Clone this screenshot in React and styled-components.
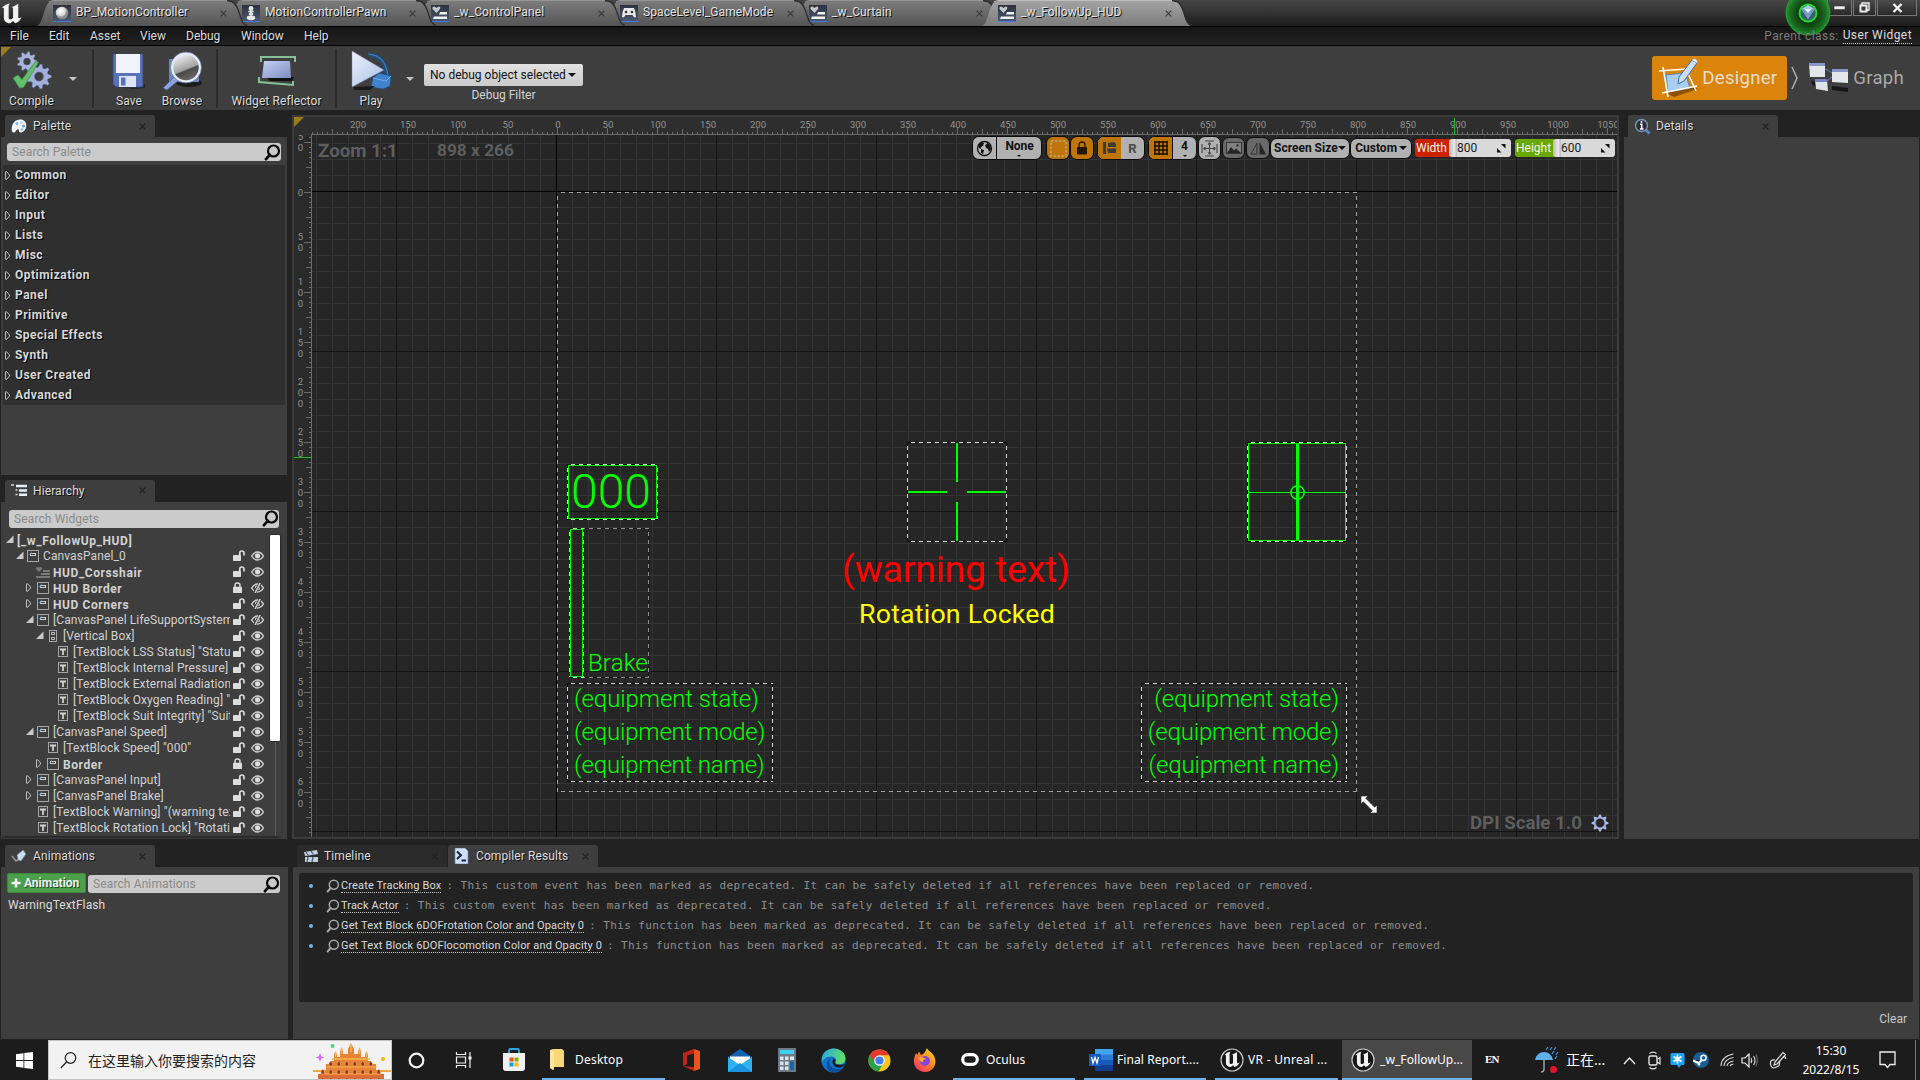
import React from "react";
import styled, { createGlobalStyle, css } from "styled-components";

const Global = createGlobalStyle`
  * { box-sizing: border-box; }
  html, body { margin: 0; padding: 0; background: #222; overflow: hidden; }
  svg { display: block; flex: none; }
`;

const Screen = styled.div`
  width: 1920px;
  height: 1080px;
  display: flex;
  flex-direction: column;
  background: #222;
  color: #dcdcdc;
  font: 12px/16px Roboto, "Noto Sans CJK SC", sans-serif;
  white-space: nowrap;
  overflow: hidden;
`;

/* ---------- title bar ---------- */
const TitleBar = styled.header`
  height: 27px;
  flex: none;
  display: flex;
  border-bottom: 1px solid #000;
  background: linear-gradient(#454545, #393939 35%, #1c1c1c);
  position: relative;
`;
const LogoBox = styled.div`
  width: 37px;
  padding: 3px 0 0 1px;
`;
const TabStrip = styled.nav`
  display: flex;
  flex: 1;
`;
const MajorTab = styled.div`
  width: 211px;
  height: 26px;
  margin-right: -22px;
  position: relative;
  z-index: ${(p) => p.$z};
  display: flex;
  align-items: flex-start;
  padding: 5px 0 0 16px;
  > svg:first-child { position: absolute; left: 0; top: 0; }
`;
const MajorLabel = styled.span`
  position: relative;
  margin-left: 5px;
  width: 144px;
  line-height: 15px;
  color: #e3e3e3;
  text-shadow: 1px 1px 0 #111;
  letter-spacing: 0.1px;
`;
const IconTile = styled.div`
  width: 18px;
  height: 17px;
  position: relative;
  background: linear-gradient(#2b3240, #4c586c);
  border-bottom: 1px solid #3f7bf0;
  > svg { position: absolute; left: 0; top: 0; }
`;
const WindowButtons = styled.div`
  display: flex;
  gap: 1px;
  height: 16px;
  margin-right: 3px;
`;
const WinButton = styled.div`
  width: ${(p) => p.$w}px;
  height: 16px;
  border: 1px solid #777;
  border-top: 0;
  background: linear-gradient(#4a4a4a, #2a2a2a);
  display: flex;
  justify-content: center;
  align-items: center;
`;
const SourceOrb = styled.div`
  position: absolute;
  left: 1785px;
  top: -10px;
  z-index: 20;
`;

/* ---------- menu ---------- */
const MenuBar = styled.div`
  height: 19px;
  flex: none;
  display: flex;
  align-items: center;
  padding: 0 8px 1px 10px;
  background: linear-gradient(#151515, #222);
  border-bottom: 1px solid #000;
`;
const MenuItem = styled.span`
  width: ${(p) => p.$w}px;
  color: #dedede;
  text-shadow: 1px 1px 0 #000;
`;
const ParentClass = styled.div`
  margin-left: auto;
  display: flex;
  gap: 5px;
  color: #7b7b7b;
  letter-spacing: 0.42px;
  position: relative;
  z-index: 30;
  > span:first-child { margin-right: -1px; }
`;
const DottedLink = styled.span`
  color: #dcdcdc;
  line-height: ${(p) => p.$lh || 15}px;
  height: ${(p) => (p.$lh || 15) + 1}px;
  border-bottom: 1px dotted #c8c8c8;
`;

/* ---------- toolbar ---------- */
const Toolbar = styled.div`
  height: 64px;
  flex: none;
  margin-left: 1px;
  background: #3e3e3e;
  display: flex;
  align-items: flex-start;
  position: relative;
`;
const Corner = styled.i`
  position: absolute;
  left: 0;
  top: ${(p) => p.$top || 0}px;
  border-top: 10px solid #9c7d1e;
  border-right: 10px solid transparent;
`;
const Tool = styled.div`
  width: ${(p) => p.$w}px;
  height: 64px;
  flex: none;
  display: flex;
  flex-direction: column;
  align-items: center;
  padding-top: 4px;
  color: #dcdcdc;
  text-shadow: 1px 1px 0 #111;
  > span { margin-top: 1px; line-height: 16px; letter-spacing: 0.1px; }
`;
const ToolSep = styled.i`
  width: 2px;
  height: 59px;
  margin-top: 3px;
  margin-left: ${(p) => p.$ml || 0}px;
  background: #2c2c2c;
`;
const Caret = styled.i`
  width: 0;
  border: ${(p) => p.$s || 4}px solid transparent;
  border-top-color: ${(p) => p.$c || "#c6c6c6"};
  border-bottom: 0;
  margin: ${(p) => p.$m || "0"};
  flex: none;
`;
const DebugBox = styled.div`
  display: flex;
  flex-direction: column;
  align-items: center;
  padding-top: 18px;
  margin-left: 10px;
  > span { margin-top: 1px; color: #d4d4d4; }
`;
const Combo = styled.div`
  width: 159px;
  height: 22px;
  border-radius: 2px;
  background: linear-gradient(#e2e2e2, #cbcbcb);
  color: #111;
  display: flex;
  align-items: center;
  padding-left: 6px;
`;
const ModeBar = styled.div`
  margin: 10px 0 0 auto;
  display: flex;
  align-items: center;
  height: 44px;
  font-size: 18.67px;
  letter-spacing: 0.22px;
  color: #a9a9a9;
  padding-right: 16px;
  > span { margin-left: 4px; }
`;
const ModeActive = styled.div`
  width: 135px;
  height: 44px;
  border-radius: 3px;
  background: #db840c;
  color: #e8dccb;
  display: flex;
  align-items: center;
  padding-left: 6px;
  gap: 2px;
`;

/* ---------- docking ---------- */
const Main = styled.div`
  display: flex;
  flex: none;
  margin-top: 5px;
  height: 724px;
  padding-left: 1px;
  gap: 5px;
`;
const LeftColumn = styled.div`
  width: 286px;
  display: flex;
  flex-direction: column;
  gap: 5px;
`;
const Dock = styled.section`
  width: ${(p) => p.$w}px;
  flex: ${(p) => (p.$grow ? 1 : "none")};
  min-height: 0;
  display: flex;
  flex-direction: column;
`;
const TabRow = styled.div`
  display: flex;
  gap: 1px;
  height: 22px;
  flex: none;
  padding-left: 4px;
`;
const DockTab = styled.div`
  width: 150px;
  height: 22px;
  border-radius: 3px 3px 0 0;
  background: ${(p) => (p.$dim ? "#2b2b2b" : "#3e3e3e")};
  display: flex;
  align-items: center;
  padding-left: 6px;
  color: #dcdcdc;
  text-shadow: 1px 1px 0 #111;
  > span { margin-left: ${(p) => p.$gap || 6}px; flex: 1; letter-spacing: 0.1px; }
  > svg:last-child { margin-right: 9px; }
`;
const DockBody = styled.div`
  flex: 1;
  min-height: 0;
  background: #3e3e3e;
  padding: ${(p) => p.$pad || "0"};
  display: flex;
  flex-direction: column;
  overflow: hidden;
`;
const Search = styled.div`
  height: 18px;
  flex: none;
  width: ${(p) => p.$w}px;
  border-radius: 3px;
  background: #cbcbcb;
  color: #8a8a8a;
  display: flex;
  align-items: center;
  justify-content: space-between;
  padding: 0 0 0 5px;
  letter-spacing: 0.12px;
`;
const CategoryList = styled.div`
  margin: 4px -4px 0;
  background: #2f2f2f;
  width: 282px;
`;
const Category = styled.div`
  height: 20px;
  display: flex;
  align-items: center;
  padding-left: 2px;
  gap: 3px;
  font-weight: 700;
  color: #d8d8d8;
  text-shadow: 1px 1px 0 #000;
  letter-spacing: 0.48px;
`;

/* ---------- hierarchy ---------- */
const TreeArea = styled.div`
  display: flex;
  margin-top: 4px;
  height: 304px;
  overflow: hidden;
  width: 280px;
  margin-left: -8px;
  box-shadow: 0 2px 3px -1px #1c1c1c;
`;
const Tree = styled.div`width: 267px; flex: none; margin-right: 1px;`;
const TreeRow = styled.div`
  height: 16px;
  display: flex;
  align-items: center;
  padding-left: ${(p) => 5 + 10 * p.$d}px;
  font-weight: ${(p) => (p.$b ? 700 : 400)};
  color: #d2d2d2;
`;
const TreeArrow = styled.div`width: 10px; flex: none; display: flex;`;
const TreeIcon = styled.div`
  width: 16px;
  flex: none;
  display: flex;
  justify-content: center;
  padding-right: 3px;
  padding-left: 1px;
`;
const TreeName = styled.span`
  flex: 1;
  overflow: hidden;
  letter-spacing: ${(p) => (p.$b ? 0.58 : 0.1)}px;
  padding-top: ${(p) => (p.$b ? 2 : 0)}px;
  padding-left: 1px;
`;
const TreeFlags = styled.div`width: 38px; flex: none; display: flex; align-items: center; gap: 6px; padding-left: 3px;`;
const ScrollTrack = styled.div`
  width: 12px;
  display: flex;
  flex-direction: column;
  align-items: center;
  > b { width: 12px; height: 208px; margin-top: 2px; border-radius: 2px; background: #fff; border: 1px solid #2b2b2b; flex: none; }
  > i { width: 1px; flex: 1; background: #5a5a5a; }
`;

/* ---------- designer viewport ---------- */
const Viewport = styled.div`
  width: 1327px;
  flex: none;
  height: 724px;
  position: relative;
  display: grid;
  grid-template: 18px 702px / 18px 1305px;
  border: 2px solid #3b3b3b;
  background: #242424;
  overflow: hidden;
`;
const HRuler = styled.div`
  grid-column: 2;
  display: flex;
  margin-left: -1px;
  padding-left: 22px;
  height: 18px;
  overflow: hidden;
  border-bottom: 1px solid #6b6b6b;
  color: #929292;
  font-size: 9.6px;
  line-height: 16px;
  background:
    repeating-linear-gradient(90deg, #6b6b6b 0 1px, transparent 1px 50px) 46px 100% / 100% 6px no-repeat,
    repeating-linear-gradient(90deg, #6b6b6b 0 1px, transparent 1px 25px) 21px 100% / 100% 5px no-repeat,
    repeating-linear-gradient(90deg, #6b6b6b 0 1px, transparent 1px 5px) 1px 100% / 100% 2px no-repeat,
    #2e2e2e;
`;
const HMark = styled.span`width: 50px; flex: none; text-align: center;`;
const RulerCorner = styled.div`background: #2e2e2e;`;
const VRuler = styled.div`
  grid-column: 1;
  grid-row: 2;
  width: 18px;
  overflow: hidden;
  border-right: 1px solid #6b6b6b;
  color: #929292;
  font-size: 9.6px;
  line-height: 11px;
  background:
    repeating-linear-gradient(#6b6b6b 0 1px, transparent 1px 50px) 100% 7px / 7px 100% no-repeat,
    repeating-linear-gradient(#6b6b6b 0 1px, transparent 1px 25px) 100% 7px / 5px 100% no-repeat,
    repeating-linear-gradient(#6b6b6b 0 1px, transparent 1px 5px) 100% 2px / 2px 100% no-repeat,
    #2a2a2a;
`;
const VMarks = styled.div`margin-top: -18px;`;
const VMark = styled.div`
  height: 50px;
  width: 13px;
  display: flex;
  flex-direction: column;
  align-items: center;
  justify-content: center;
`;
const Grid = styled.div`
  grid-column: 2;
  grid-row: 2;
  position: relative;
  overflow: hidden;
  background:
    linear-gradient(90deg, #000 1px, transparent 1px) 244px 0 / 1200px 100% no-repeat,
    linear-gradient(#000 1px, transparent 1px) 0 56px / 100% 800px no-repeat,
    linear-gradient(90deg, #141414 1px, transparent 1px) 84px 0 / 160px 160px,
    linear-gradient(#141414 1px, transparent 1px) 0 56px / 160px 160px,
    linear-gradient(90deg, #343434 1px, transparent 1px) 4px 0 / 16px 16px,
    linear-gradient(#343434 1px, transparent 1px) 0 8px / 16px 16px,
    #262626;
`;
const CursorX = styled.i`position: absolute; left: 1160px; top: 1px; width: 1px; height: 17px; background: #17c317;`;
const CursorY = styled.i`position: absolute; left: 0; top: 340px; width: 18px; height: 1px; background: #17c317;`;
const Overlay = styled.div`
  position: absolute;
  left: ${(p) => p.$x}px;
  top: ${(p) => p.$y}px;
  color: #5e5e5e;
  font-size: ${(p) => p.$s || 18.67}px;
  line-height: 22px;
  font-weight: 700;
  letter-spacing: ${(p) => p.$ls || 0}px;
  display: flex;
  align-items: center;
  gap: 9px;
`;
const dashes = (a, b) => css`
  background:
    repeating-linear-gradient(90deg, ${b} 0 4px, ${a} 4px 8px) 0 0 / 100% 1px no-repeat,
    repeating-linear-gradient(90deg, ${b} 0 4px, ${a} 4px 8px) 0 100% / 100% 1px no-repeat,
    repeating-linear-gradient(${b} 0 4px, ${a} 4px 8px) 0 0 / 1px 100% no-repeat,
    repeating-linear-gradient(${b} 0 4px, ${a} 4px 8px) 100% 0 / 1px 100% no-repeat;
`;
const Artboard = styled.div`
  position: absolute;
  left: 245px;
  top: 57px;
  width: 800px;
  height: 600px;
  ${dashes("#a0a0a0", "transparent")}
`;
const Widget = styled.div`
  position: absolute;
  left: ${(p) => p.$x}px;
  top: ${(p) => p.$y}px;
  width: ${(p) => p.$w}px;
  height: ${(p) => p.$h}px;
  ${(p) => (p.$soft ? dashes("#8d8d8d", "#161616") : dashes("#d2d2d2", "#060606"))}
`;
const HudFrame = styled.div`
  margin: 1px;
  width: calc(100% - 2px);
  height: calc(100% - 2px);
  border: 1px solid #0f0;
`;
const HudText = styled.div`
  color: ${(p) => p.$c || "#0f0"};
  font-size: ${(p) => p.$s}px;
  line-height: ${(p) => p.$lh}px;
  font-weight: ${(p) => p.$wt || 300};
  letter-spacing: ${(p) => p.$ls || 0}px;
  text-align: ${(p) => p.$align || "left"};
  padding: ${(p) => p.$pad || "0"};
`;
const FreeText = styled(HudText)`
  position: absolute;
  left: ${(p) => p.$x}px;
  top: ${(p) => p.$y}px;
  width: ${(p) => p.$w}px;
`;
const Pointer = styled.div`position: absolute; left: 1048px; top: 660px;`;

const CanvasTools = styled.div`
  position: absolute;
  left: 678px;
  top: 18px;
  display: flex;
  align-items: center;
  height: 26px;
  color: #111;
  font-weight: 700;
`;
const Pill = styled.div`
  width: ${(p) => p.$w}px;
  height: ${(p) => p.$h || 24}px;
  margin-right: ${(p) => p.$mr || 0}px;
  border: 1px solid #0c0c0c;
  border-radius: 7px;
  overflow: hidden;
  display: flex;
  background: ${(p) => p.$bg || "#b1b1b1"};
`;
const Cell = styled.div`
  flex: ${(p) => (p.$w ? "none" : 1)};
  width: ${(p) => (p.$w ? p.$w + "px" : "auto")};
  display: flex;
  flex-direction: column;
  align-items: center;
  justify-content: center;
  color: ${(p) => p.$c || "#111"};
  background: ${(p) => (p.$on ? "#bf7408" : "transparent")};
  border-right: ${(p) => (p.$line ? "1px solid #0c0c0c" : "0")};
  font-size: ${(p) => p.$s || 12}px;
  line-height: 13px;
`;
const DropPill = styled(Pill)`
  align-items: center;
  padding-left: 3px;
  justify-content: space-between;
  padding-right: 4px;
`;
const SizeField = styled.div`
  height: 18px;
  display: flex;
  margin-right: 4px;
  font-weight: 400;
  > span {
    width: ${(p) => p.$lw}px;
    background: ${(p) => p.$bg};
    color: #f3f3f3;
    line-height: 18px;
    border-radius: 3px 0 0 3px;
    padding-left: 1px;
    margin-right: -3px;
  }
  > div {
    width: ${(p) => p.$fw}px;
    border-radius: 3px;
    background: linear-gradient(90deg, #bbb, #eee 6px, #aaa 7px, #d9d9d9 8px);
    color: #222;
    display: flex;
    justify-content: space-between;
    align-items: center;
    padding: 0 5px 0 8px;
  }
`;

/* ---------- bottom panels ---------- */
const Bottom = styled.div`
  display: flex;
  flex: none;
  height: 194px;
  margin-top: 6px;
  padding-left: 1px;
  gap: 5px;
`;
const Row = styled.div`display: flex; align-items: flex-end; gap: ${(p) => p.$g || 0}px;`;
const AddButton = styled.div`
  width: 79px;
  height: 20px;
  border: 1px solid #3a8a3a;
  border-radius: 2px;
  background: #4ca04c;
  color: #f0f0f0;
  font-weight: 700;
  display: flex;
  align-items: center;
  gap: 3px;
  padding-left: 3px;
  text-shadow: 1px 1px 0 #1c501c;
`;
const AnimName = styled.div`margin: 4px 0 0 1px; line-height: 17px; letter-spacing: 0.1px;`;
const LogBox = styled.div`
  height: 129px;
  border-radius: 3px;
  background: #222;
  padding-top: 3px;
`;
const LogRow = styled.div`
  height: 20px;
  display: flex;
  align-items: center;
  padding-left: 10px;
  font-size: 11px;
  letter-spacing: 0.145px;
  > b { width: 4px; height: 4px; border-radius: 2px; background: #73b4e8; margin-right: 13px; }
  > svg { margin-right: 1px; }
`;
const LogMessage = styled.span`
  margin-left: 5px;
  color: #8e8e8e;
  font: 11px/16px "DejaVu Sans Mono", monospace;
  letter-spacing: 0.378px;
  white-space: pre;
`;
const Clear = styled.div`text-align: right; padding: 9px 6px 0 0; color: #c8c8c8;`;

/* ---------- task bar ---------- */
const Taskbar = styled.footer`
  height: 40px;
  margin-top: auto;
  flex: none;
  background: #1c1c1c;
  display: flex;
  font-family: "Noto Sans", "Noto Sans CJK SC", sans-serif;
  color: #fff;
`;
const Slot = styled.div`
  width: ${(p) => p.$w}px;
  height: 40px;
  flex: none;
  display: flex;
  align-items: center;
  justify-content: center;
`;
const TaskSearch = styled.div`
  width: 344px;
  height: 40px;
  flex: none;
  background: #f2f2f2;
  border: 1px solid #c4c4c4;
  color: #222;
  display: flex;
  align-items: center;
  padding-left: 11px;
  font: 14px/20px "Noto Sans CJK SC", sans-serif;
  > span { margin-left: 11px; flex: 1; }
  > svg:last-child { align-self: flex-end; }
`;
const TaskItem = styled.div`
  width: ${(p) => p.$w}px;
  margin-left: ${(p) => p.$ml || 0}px;
  height: 40px;
  flex: none;
  display: flex;
  align-items: center;
  padding-left: ${(p) => p.$pl || 8}px;
  gap: ${(p) => p.$g || 7}px;
  background: ${(p) => (p.$active ? "#484848" : "transparent")};
  border-bottom: 2px solid #6fb1e8;
  padding-top: 1px;
  font-size: 12px;
  letter-spacing: ${(p) => p.$ls || 0.08}px;
`;
const Tray = styled.div`
  display: flex;
  align-items: center;
  position: relative;
  flex: 1;
`;
const TrayCell = styled.div`
  width: ${(p) => p.$w}px;
  flex: none;
  display: flex;
  align-items: center;
  font-size: ${(p) => p.$s || 12}px;
`;
const Lang = styled.div`
  width: 62px;
  padding-left: 13px;
  font: 700 11px/14px "Liberation Serif", serif;
  letter-spacing: -0.9px;
  margin-top: -3px;
`;
const Clock = styled.div`
  width: 78px;
  text-align: center;
  font-size: 12px;
  line-height: 19px;
`;
const ShowDesktop = styled.i`width: 1px; height: 40px; background: #777; margin-left: auto; margin-right: 4px;`;

/* ---------- drawings ---------- */
const U_PATH = "M0.8 5.5C3 2.4 6 1 9.4 .6 8.3 1.6 8 2.5 8 4v11.4c0 1.3.9 1.7 1.8 1.6 1.2-.1 2-.6 2.8-1.4V5.8c0-1-.6-1.5-1.6-1.6C13.3 3.7 16 2.4 18 .9v13.7c0 1 .4 1.4 1 1.3 1-.1 1.800-.8 2.500-1.800-.8 3.600-3 6-6.700 7l-2.200-2.300-3 2.300C5.300 21 3 18.600 3 15.300V5.600c0-.9-1-.9-2.200-.1z";
const UMark = ({ s = 24, c = "#f2f2f2" }) => (
  <svg width={s} height={s} viewBox="0 0 24 24"><path fill={c} d={U_PATH} /></svg>
);
const RoundU = () => (
  <svg width="24" height="24" viewBox="0 0 24 24">
    <circle cx="12" cy="12" r="11" fill="#171717" stroke="#c9c9c9" strokeWidth="1.2" />
    <path fill="#f2f2f2" transform="translate(3.700 3.400) scale(.74)" d={U_PATH} />
  </svg>
);
const TabShape = ({ active }) => (
  <svg width="211" height="26" viewBox="0 0 211 26">
    <defs>
      <linearGradient id={active ? "ta" : "ti"} x1="0" y1="0" x2="0" y2="1">
        <stop offset="0" stopColor={active ? "#a3a3a3" : "#7c7c7c"} />
        <stop offset="1" stopColor={active ? "#7c7c7c" : "#545454"} />
      </linearGradient>
    </defs>
    <path d="M0 26C6 24 7 6 12 2.500Q13.500 1 16 1H190Q195 1 197 4C203 12 202 24 209 26Z" fill={`url(#${active ? "ta" : "ti"})`} />
    <path d="M190 .5Q196 1 198 4C204 12 203 24 210 25.500" fill="none" stroke="#2d2d2d" strokeWidth="1.300" />
    <path d="M12 2Q14 .5 17 .5H190" fill="none" stroke={active ? "#c0c0c0" : "#959595"} strokeWidth="1" />
  </svg>
);
const Cross = ({ c = "#1f1f1f", s = 7 }) => (
  <svg width={s} height={s} viewBox="0 0 7 7"><path d="M.7 .7l5.600 5.600M6.300 .7L.7 6.300" stroke={c} strokeWidth="1.100" /></svg>
);
const TabCross = styled.div`position: relative; margin-top: 5px;`;
const TileSphere = () => (
  <svg width="18" height="16"><defs><radialGradient id="sp" cx=".4" cy=".35"><stop offset="0" stopColor="#fff" /><stop offset=".7" stopColor="#dadada" /><stop offset="1" stopColor="#8a8a8a" /></radialGradient></defs><circle cx="9" cy="8" r="6.300" fill="url(#sp)" /></svg>
);
const TilePawn = () => (
  <svg width="18" height="16"><g fill="#e8e8e8"><circle cx="9" cy="3.500" r="2.400" /><ellipse cx="9" cy="6.600" rx="3" ry="1" /><ellipse cx="9" cy="9" rx="2.300" ry="1.800" /><ellipse cx="9" cy="12.800" rx="4.300" ry="2.400" /></g></svg>
);
const TileWidget = () => (
  <svg width="18" height="16"><path d="M5.500 8L1.500 4Q1 1 3.500 1.500L5.500 3 7.500 1.500Q10 1.500 9 4z" fill="#c9c9c9" /><path d="M9 7h7v2.500H8zM3 11.500h13V14H2z" fill="#f0f0f0" /></svg>
);
const TilePad = () => (
  <svg width="18" height="16"><path d="M4 3h10q2 4 2 9-2 1.500-3.500-2h-7Q4 13.500 2 12 2 7 4 3z" fill="#e8e8e8" /><circle cx="6" cy="7" r="1.300" fill="#333" /><circle cx="12" cy="7" r="1.300" fill="#333" /></svg>
);
const gearPath = (cx, cy, r, n) => {
  let d = "";
  for (let i = 0; i < n * 4; i++) {
    const a = ((i - 0.5) / (n * 4)) * Math.PI * 2;
    const rr = i % 4 < 2 ? r : r * 0.74;
    d += (i ? "L" : "M") + (cx + rr * Math.cos(a)).toFixed(2) + " " + (cy + rr * Math.sin(a)).toFixed(2);
  }
  return d + "z";
};
const CompileIcon = () => (
  <svg width="44" height="42" viewBox="0 0 44 42">
    <path d={gearPath(17, 11.5, 10, 9) + "M20.500 11.500a3.500 3.500 0 1 0-7 0a3.500 3.500 0 1 0 7 0z"} fill="#a9b5dc" fillRule="evenodd" stroke="#55608a" strokeWidth=".5" />
    <path d={gearPath(29, 26.5, 12.5, 9) + "M33.500 26.500a4.500 4.500 0 1 0-9 0a4.500 4.500 0 1 0 9 0z"} fill="#a3b0dc" fillRule="evenodd" stroke="#55608a" strokeWidth=".5" />
    <path d="M3 28l5-3 4 4.500L26 11l2.500 1.500L13.500 37.500 9.500 38z" fill="#64bd69" stroke="#3e8b46" strokeWidth=".6" />
  </svg>
);
const SaveIcon = () => (
  <svg width="36" height="42" viewBox="0 0 36 42">
    <path d="M6 37l28-3 0 4-12 1z" fill="#1b1b1b" opacity=".7" />
    <path d="M2 4h30v33H5l-3-3z" fill="#5673bb" stroke="#34477e" strokeWidth=".8" />
    <path d="M5 4h24v19H5z" fill="#f1f3fa" /><path d="M8 26h17v11H8z" fill="#dde3f2" /><path d="M10 27.500h4.500v8H10z" fill="#5673bb" />
  </svg>
);
const BrowseIcon = () => (
  <svg width="42" height="42" viewBox="0 0 42 42">
    <defs>
      <linearGradient id="lens" x1=".3" y1="0" x2=".7" y2="1"><stop offset="0" stopColor="#f4f4f4" /><stop offset=".55" stopColor="#a2a2a2" /><stop offset=".6" stopColor="#4a4a4a" /><stop offset="1" stopColor="#6f6f6f" /></linearGradient>
    </defs>
    <ellipse cx="28" cy="33" rx="13" ry="4" fill="#151515" opacity=".8" />
    <path d="M8 9h30v23H8z" fill="#6b84c4" />
    <path d="M14 26l4 4L6 40 2 38z" fill="#8ba3dc" stroke="#45588f" strokeWidth=".7" />
    <circle cx="25" cy="17.500" r="14" fill="url(#lens)" stroke="#e6edf8" strokeWidth="2.500" /><circle cx="25" cy="17.500" r="15.500" fill="none" stroke="#6f86b4" strokeWidth=".7" />
  </svg>
);
const ReflectorIcon = () => (
  <svg width="42" height="42" viewBox="0 0 42 42">
    <defs><linearGradient id="rf" x1="0" y1="0" x2="1" y2="1"><stop offset="0" stopColor="#c7d1f2" /><stop offset="1" stopColor="#7c8cc2" /></linearGradient></defs>
    <path d="M10 27h28l-2 4H14z" fill="#111" /><path d="M8 11h26l1 17H6z" fill="url(#rf)" />
    <path d="M5 12V7h34v5M3 27v5l34 3v-4" fill="none" stroke="#86c193" strokeWidth="2" />
  </svg>
);
const PlayIcon = () => (
  <svg width="44" height="42" viewBox="0 0 44 42">
    <defs><linearGradient id="pl" x1="0" y1="0" x2="1" y2="1"><stop offset="0" stopColor="#eef3fc" /><stop offset="1" stopColor="#a9bde4" /></linearGradient></defs>
    <path d="M20 5c12 0 17 9 18 22" fill="none" stroke="#1d4f80" strokeWidth="4" /><path d="M19 4c13 1 19 10 20 23" fill="none" stroke="#3a80bd" strokeWidth="1.200" />
    <path d="M24 28l6-5 12 3-1 10-7 3-12-2z" fill="#3f83cc" stroke="#1e4f86" strokeWidth=".7" /><path d="M24 28l13 3 5-5" stroke="#74aee6" fill="none" />
    <path d="M4 37l22-1-5 4H6z" fill="#1a1a1a" /><path d="M3 1L35 20 3 37z" fill="url(#pl)" stroke="#7487ac" strokeWidth=".5" />
  </svg>
);
const DesignerIcon = () => (
  <svg width="42" height="42" viewBox="0 0 42 42">
    <path d="M8 36l26-6 6 2-24 8z" fill="#6b3c00" opacity=".7" />
    <path d="M8 18l19-2 5 15-22 4z" fill="#a9cdee" stroke="#5c88bb" />
    <path d="M1 14l27-2M4 36l35-7M5 10l5 30M28 12l10 22" stroke="#fff" strokeWidth="1.600" fill="none" />
    <path d="M34 3l5 3-13 18-6 3 1-7z" fill="#c9defa" stroke="#3f6bb0" /><path d="M34 3q2-2 4-.5t1 3.500z" fill="#fff" stroke="#9cb6da" strokeWidth=".6" />
  </svg>
);
const GraphIcon = () => (
  <svg width="41" height="32" viewBox="0 0 41 32">
    <path d="M3 18l8 5v5l-7-6zM24 24l16 2v4l-16-2z" fill="#161616" /><path d="M16 6l8 5M16 21l8-6" stroke="#5470a8" strokeWidth="1.200" />
    <path d="M1 2h16v13H2z" fill="#e4e6ea" /><path d="M1 1h16v3H1z" fill="#8896c8" /><path d="M24 8h16v13l-16-1z" fill="#e4e6ea" /><path d="M24 7h16v3H24z" fill="#8896c8" /><path d="M7 18h12l1 11-12-2z" fill="#dfe3ea" /><path d="M7 17h12v3H7z" fill="#7386c4" />
  </svg>
);
const Mag = ({ c = "#080808", s = 17, w = 2.2 }) => (
  <svg width={s} height={s} viewBox="0 0 17 17"><circle cx="9.500" cy="7" r="5.500" fill="none" stroke={c} strokeWidth={w} /><path d="M5.800 10.800L2 15.200" stroke={c} strokeWidth={w + 0.6} strokeLinecap="round" /></svg>
);
const PaletteIcon = () => (
  <svg width="16" height="15" viewBox="0 0 16 15"><path d="M9 .5c4 0 6.500 2.500 6.300 6.500-.3 4-3.300 6.500-5.500 6.500-1.800 0-1.800-1-2-2.500-.2-1-1.300-1-2-.2-1 1.200-1.300 2.700-3 2.700C1 13.500 .5 11.500 .8 9 1.300 4 4.500.5 9 .5z" fill="#f3f8fd" /><circle cx="6" cy="4.500" r="1.500" fill="#8ab8e8" /><circle cx="10.500" cy="3.500" r="1.300" fill="#a9cdf0" /><circle cx="12.500" cy="7" r="1.500" fill="#6b9ed8" /><circle cx="11" cy="10.500" r="1.300" fill="#8ab8e8" /></svg>
);
const HierIcon = () => (
  <svg width="16" height="13" viewBox="0 0 16 13"><path d="M0 1h3M4.500 6h2M4.500 10.500h2" stroke="#ddd" strokeWidth="1.500" /><path d="M5 2h11M8 6.500h8M8 10.800h8" stroke="#e9eff5" strokeWidth="2.600" /></svg>
);
const DetailsIcon = () => (
  <svg width="17" height="17" viewBox="0 0 17 17"><path d="M11 11l4.500 4.500" stroke="#5a86d6" strokeWidth="2.600" /><circle cx="7.500" cy="7.500" r="6" fill="#2d3038" stroke="#7f93b8" strokeWidth="1.400" /><path d="M7.500 3v1.800M6 6.300h1.700v4.500M6 10.900h3.500" stroke="#fff" strokeWidth="1.500" fill="none" /></svg>
);
const AnimIcon = () => (
  <svg width="16" height="14" viewBox="0 0 16 14"><path d="M1 7l4 5 5-3" stroke="#999" strokeWidth="1.500" fill="none" /><path d="M6 6l6-5 3 4-5 7-3-1z" fill="#c7def0" stroke="#778" strokeWidth=".5" /></svg>
);
const TimelineIcon = () => (
  <svg width="16" height="14" viewBox="0 0 16 14"><path d="M1 3l13-2 1 4-13 2zM2 8h13v5H2z" fill="#c3cfe2" /><path d="M3 3l2 3M8 2l2 3M5 8l-1 5M10 8l-1 5" stroke="#4d5c7b" strokeWidth="1.300" /></svg>
);
const CompilerIcon = () => (
  <svg width="15" height="16" viewBox="0 0 15 16"><path d="M1 0h10l3 3v13H1z" fill="#cfe0f8" stroke="#6d86b8" strokeWidth=".7" /><path d="M3 3.500l4 3.800-4 3.700M7.500 12.500H12" stroke="#15233f" strokeWidth="2" fill="none" /></svg>
);
const Closed = () => <svg width="7" height="9" viewBox="0 0 7 9"><path d="M.5 .8h1.300L4.500 4v1L1.800 8.200H.5z" fill="none" stroke="#bdbdbd" strokeWidth="1" /></svg>;
const Open = () => <svg width="8" height="9" viewBox="0 0 8 9"><path d="M7.500 .5v7.500H0z" fill="#c9c9c9" /></svg>;
const CanvasIcon = () => <svg width="12" height="12" viewBox="0 0 12 12"><rect x=".5" y=".5" width="11" height="11" fill="none" stroke="#a6a6a6" /><rect x="3.500" y="3.500" width="5" height="2" fill="none" stroke="#d0d0d0" /><path d="M4.500 1.500v2M1.500 4.500h2" stroke="#2d82c8" /></svg>;
const VBoxIcon = () => <svg width="8" height="12" viewBox="0 0 8 12"><rect x=".5" y=".5" width="7" height="11" fill="none" stroke="#a6a6a6" /><path d="M2.500 2.500h3v2h-3zM2.500 7.500h3v2h-3z" fill="none" stroke="#c0c0c0" /></svg>;
const TextIcon = () => <svg width="10" height="11" viewBox="0 0 10 11"><rect x=".5" y=".5" width="9" height="10" fill="none" stroke="#a6a6a6" /><path d="M2 3.500h6M5 3.500V9" stroke="#cfcfcf" strokeWidth="1.800" /></svg>;
const WidgetIcon = () => <svg width="16" height="14" viewBox="0 0 16 14"><path d="M4 7L.5 3.500Q1 1 4 2.500 7 1 7.500 3.500z" fill="#777" /><path d="M8 6h7M1 12h14M6 9h9" stroke="#8d8d8d" strokeWidth="1.600" /></svg>;
const Unlock = () => <svg width="12" height="11" viewBox="0 0 12 11"><rect x="0" y="5" width="8" height="6" rx=".8" fill="#dcdcdc" /><path d="M6.800 5.500V3q0-2 2-2t2.200 2v2.500" fill="none" stroke="#dcdcdc" strokeWidth="1.700" /></svg>;
const Lock = ({ c = "#dcdcdc", s = 12 }) => <svg width={s} height={s - 1} viewBox="0 0 12 11"><rect x="0" y="4.800" width="9" height="6.200" rx=".8" fill={c} /><path d="M2 5V3.200Q2 1 4.500 1T7 3.200V5" fill="none" stroke={c} strokeWidth="1.500" /></svg>;
const Eye = ({ off }) => (
  <svg width="13" height="10" viewBox="0 0 13 10">
    <path d="M.6 5Q3 1 6.500 1T12.400 5Q10 9 6.500 9T.6 5z" fill="none" stroke="#d6d6d6" strokeWidth="1.400" /><circle cx="6.500" cy="4.800" r="2.600" fill="#dedede" />
    {off && <path d="M9.500 0L3.500 10" stroke="#3e3e3e" strokeWidth="3.200" />}{off && <path d="M9.200 0L4 10" stroke="#d6d6d6" strokeWidth="1.400" />}
  </svg>
);

/* ---------- data ---------- */
const TABS = [
  ["BP_MotionController", <TileSphere key="i" />],
  ["MotionControllerPawn", <TilePawn key="i" />],
  ["_w_ControlPanel", <TileWidget key="i" />],
  ["SpaceLevel_GameMode", <TilePad key="i" />],
  ["_w_Curtain", <TileWidget key="i" />],
  ["_w_FollowUp_HUD", <TileWidget key="i" />],
];
const MENU = [["File", 39], ["Edit", 41], ["Asset", 50], ["View", 46], ["Debug", 55], ["Window", 63], ["Help", 40]];
const CATS = ["Common", "Editor", "Input", "Lists", "Misc", "Optimization", "Panel", "Primitive", "Special Effects", "Synth", "User Created", "Advanced"];
const TREE = [
  [0, "o", null, "[_w_FollowUp_HUD]", 1, "", ""],
  [1, "o", "c", "CanvasPanel_0", 0, "u", "e"],
  [2, "", "w", "HUD_Corsshair", 1, "u", "e"],
  [2, "c", "c", "HUD Border", 1, "l", "h"],
  [2, "c", "c", "HUD Corners", 1, "u", "h"],
  [2, "o", "c", "[CanvasPanel LifeSupportSystem", 0, "u", "h"],
  [3, "o", "v", "[Vertical Box]", 0, "u", "e"],
  [4, "", "t", '[TextBlock LSS Status] "Statu', 0, "u", "e"],
  [4, "", "t", '[TextBlock Internal Pressure] "', 0, "u", "e"],
  [4, "", "t", "[TextBlock External Radiation", 0, "u", "e"],
  [4, "", "t", '[TextBlock Oxygen Reading] "', 0, "u", "e"],
  [4, "", "t", '[TextBlock Suit Integrity] "Suit', 0, "u", "e"],
  [2, "o", "c", "[CanvasPanel Speed]", 0, "u", "e"],
  [3, "", "t", '[TextBlock Speed] "000"', 0, "u", "e"],
  [3, "c", "c", "Border", 1, "l", "e"],
  [2, "c", "c", "[CanvasPanel Input]", 0, "u", "e"],
  [2, "c", "c", "[CanvasPanel Brake]", 0, "u", "e"],
  [2, "", "t", '[TextBlock Warning] "(warning tex', 0, "u", "e"],
  [2, "", "t", '[TextBlock Rotation Lock] "Rotati', 0, "u", "e"],
];
const TREE_ICONS = { c: <CanvasIcon />, v: <VBoxIcon />, t: <TextIcon />, w: <WidgetIcon /> };
const H_MARKS = [200, 150, 100, 50, ...Array.from({ length: 22 }, (_, i) => i * 50)];
const V_MARKS = ["50", ...Array.from({ length: 13 }, (_, i) => String(i * 50))];
const EVT = "This custom event has been marked as deprecated. It can be safely deleted if all references have been replaced or removed.";
const FN = "This function has been marked as deprecated. It can be safely deleted if all references have been replaced or removed.";
const LOG = [
  ["Create Tracking Box", EVT],
  ["Track Actor", EVT],
  ["Get Text Block 6DOFrotation Color and Opacity 0", FN],
  ["Get Text Block 6DOFlocomotion Color and Opacity 0", FN],
];
const EQUIPMENT = [["(equipment state)", -0.1], ["(equipment mode)", -0.18], ["(equipment name)", -0.18]];

const Tabbed = ({ icon, label, dim, gap }) => (
  <DockTab $dim={dim} $gap={gap}>{icon}<span>{label}</span><Cross /></DockTab>
);

function Palace() {
  const win = [];
  for (let r = 0; r < 3; r++) for (let i = 0; i < 8; i++) if (r > 0 || (i > 0 && i < 7)) win.push([8 + i * 8, 18 + r * 8]);
  return (
    <svg width="78" height="36" viewBox="0 0 78 36">
      <path d="M10 36V27h3V21h5v-3h3V12l1.500-4L24 12v2h3v-5L28.500 4 30 9v2h5V6L38 0l3 6v5h4V9l1.500-5L48 9v5h4v-2l1.500-4 1.500 4v6h3v3h5v6h3v9z" fill="#e88234" />
      <path d="M5 36v-5h66v5z" fill="#dd6b34" /><path d="M0 27h12v2H0zM66 27h12v2H66z" fill="#f0a840" /><path d="M14 24h50M10 31h58" stroke="#f7b04c" strokeWidth="1.200" />
      <path d="M19 16h38M22.500 9v5M28.500 5v6M38 1v8M46.500 5v6M53.500 9v5" stroke="#f5b74f" strokeWidth="1.500" />
      {win.map(([x, y], i) => <path key={i} d={`M${x} ${y + 5}v-3q1.700-3 3.400 0v3z`} fill="#8e3528" stroke="#f4b35a" strokeWidth=".6" />)}
      <path d="M7 10l1.200 3.200L11.500 14.500 8.200 15.600 7 19 5.800 15.600 2.500 14.500 5.800 13.200z" fill="#d86bf0" /><circle cx="19.500" cy="3" r="2" fill="#4fd67c" /><circle cx="70" cy="16" r="2" fill="#f8b500" />
    </svg>
  );
}

export default function App() {
  return (
    <Screen>
      <Global />
      <TitleBar>
        <LogoBox><UMark s={23} /></LogoBox>
        <TabStrip>
          {TABS.map(([t, icon], i) => (
            <MajorTab key={t} $z={i === 5 ? 12 : 10 - i}>
              <TabShape active={i === 5} />
              <IconTile>{icon}</IconTile>
              <MajorLabel>{t}</MajorLabel>
              <TabCross><Cross c="#383838" /></TabCross>
            </MajorTab>
          ))}
        </TabStrip>
        <WindowButtons>
          <WinButton $w={25}><svg width="11" height="4"><rect width="11" height="3.500" fill="#eee" stroke="#222" strokeWidth=".5" /></svg></WinButton>
          <WinButton $w={23}><svg width="11" height="11"><path d="M3 3V1h7v7H8" fill="none" stroke="#eee" strokeWidth="1.400" /><rect x="1.500" y="3.500" width="6" height="6" fill="none" stroke="#eee" strokeWidth="2" /></svg></WinButton>
          <WinButton $w={40}><svg width="11" height="10"><path d="M1.500 1l8 8M9.500 1l-8 8" stroke="#f4f4f4" strokeWidth="2.400" /></svg></WinButton>
        </WindowButtons>
        <SourceOrb>
          <svg width="46" height="46" viewBox="0 0 46 46">
            <defs><radialGradient id="orb"><stop offset="0" stopColor="#064006" /><stop offset=".45" stopColor="#0a420c" stopOpacity=".8" /><stop offset=".8" stopColor="#167a20" stopOpacity=".85" /><stop offset="1" stopColor="#25a832" stopOpacity=".9" /></radialGradient></defs>
            <circle cx="23" cy="23" r="22.500" fill="url(#orb)" />
            <circle cx="23" cy="23" r="8.500" fill="#3a5d6b" stroke="#1ee02c" strokeWidth="1.800" />
            <path d="M16.500 19l6.500-4 6.500 4-6.500 10z" fill="#a8cbe8" /><path d="M16.500 19h13l-6.500 10z" fill="#6f9cc8" /><path d="M19.500 19l3.500 4 3.500-4" fill="#e8f2fb" />
          </svg>
        </SourceOrb>
      </TitleBar>
      <MenuBar>
        {MENU.map(([m, w]) => <MenuItem key={m} $w={w}>{m}</MenuItem>)}
        <ParentClass><span>Parent class:</span><DottedLink>User Widget</DottedLink></ParentClass>
      </MenuBar>
      <Toolbar>
        <Corner $top={1} />
        <Tool $w={61}><CompileIcon /><span>Compile</span></Tool>
        <Caret $m="31px 15px 0 7px" $s={4.5} />
        <ToolSep />
        <Tool $w={70}><SaveIcon /><span>Save</span></Tool>
        <Tool $w={36}><BrowseIcon /><span>Browse</span></Tool>
        <ToolSep $ml={16} />
        <Tool $w={117}><ReflectorIcon /><span>Widget Reflector</span></Tool>
        <ToolSep />
        <Tool $w={68}><PlayIcon /><span>Play</span></Tool>
        <Caret $m="31px 0 0 1px" $s={4.5} />
        <DebugBox>
          <Combo>No debug object selected<Caret $c="#111" $m="0 0 0 2px" /></Combo>
          <span>Debug Filter</span>
        </DebugBox>
        <ModeBar>
          <ModeActive><DesignerIcon />Designer</ModeActive>
          <svg width="21" height="26" viewBox="0 0 21 26"><path d="M5 2l5 11-5 11" fill="none" stroke="#b0b0b0" strokeWidth="1.500" /></svg>
          <GraphIcon />
          <span>Graph</span>
        </ModeBar>
      </Toolbar>

      <Main>
        <LeftColumn>
          <Dock $grow>
            <TabRow><Tabbed icon={<PaletteIcon />} label="Palette" /></TabRow>
            <DockBody $pad="6px 6px 0">
              <Search $w={274}>Search Palette<Mag /></Search>
              <CategoryList>{CATS.map((c) => <Category key={c}><Closed />{c}</Category>)}</CategoryList>
            </DockBody>
          </Dock>
          <Dock $grow>
            <TabRow><Tabbed icon={<HierIcon />} label="Hierarchy" /></TabRow>
            <DockBody $pad="8px 8px 0">
              <Search $w={270}>Search Widgets<Mag /></Search>
              <TreeArea>
                <Tree>
                  {TREE.map(([d, a, ic, n, b, l, e], i) => (
                    <TreeRow key={i} $d={d} $b={b}>
                      <TreeArrow>{a === "o" ? <Open /> : a === "c" ? <Closed /> : null}</TreeArrow>
                      {ic && <TreeIcon>{TREE_ICONS[ic]}</TreeIcon>}
                      <TreeName $b={b}>{n}</TreeName>
                      <TreeFlags>{l === "u" ? <Unlock /> : l === "l" ? <Lock /> : null}{e && <Eye off={e === "h"} />}</TreeFlags>
                    </TreeRow>
                  ))}
                </Tree>
                <ScrollTrack><b /><i /></ScrollTrack>
              </TreeArea>
            </DockBody>
          </Dock>
        </LeftColumn>

        <Viewport>
          <RulerCorner />
          <HRuler>{H_MARKS.map((m, i) => <HMark key={i}>{m}</HMark>)}</HRuler>
          <VRuler>
            <VMarks>{V_MARKS.map((m, i) => <VMark key={i}>{m.split("").map((ch, k) => <span key={k}>{ch}</span>)}</VMark>)}</VMarks>
          </VRuler>
          <Grid>
            <Overlay $x={6} $y={5}>Zoom 1:1</Overlay>
            <Overlay $x={125} $y={4} $s={17.3}>898 x 266</Overlay>
            <Overlay $x={1158} $y={677}>DPI Scale 1.0
              <svg width="18" height="18" viewBox="0 0 18 18"><path d={gearPath(9, 9, 8.5, 8) + "M13.500 9a4.500 4.500 0 1 0-9 0a4.500 4.500 0 1 0 9 0z"} fill="#a9b8e8" fillRule="evenodd" /></svg>
            </Overlay>
            <Artboard>
              <Widget $x={10} $y={272} $w={91} $h={56}><HudFrame><HudText $s={48} $lh={52} $pad="0 0 0 2px">000</HudText></HudFrame></Widget>
              <Widget $x={12} $y={336} $w={80} $h={150} $soft />
              <Widget $x={12} $y={336} $w={15} $h={150}><HudFrame /></Widget>
              <FreeText $x={31} $y={455} $w={70} $s={24} $lh={33} $ls={0.15}>Brake</FreeText>
              <Widget $x={10} $y={491} $w={206} $h={99}>{EQUIPMENT.map(([t, ls]) => <HudText key={t} $s={24} $lh={33} $ls={ls} $pad="0 0 0 7px">{t}</HudText>)}</Widget>
              <Widget $x={584} $y={491} $w={206} $h={99}>{EQUIPMENT.map(([t, ls]) => <HudText key={t} $s={24} $lh={33} $ls={ls} $align="right" $pad="0 8px 0 0">{t}</HudText>)}</Widget>
              <Widget $x={350} $y={250} $w={100} $h={100}>
                <svg width="100" height="100"><path d="M50 1v39M50 60v39M1 50h39M60 50h39" stroke="#0f0" strokeWidth="2" /></svg>
              </Widget>
              <Widget $x={690} $y={250} $w={100} $h={100}>
                <svg width="100" height="100"><rect x="1.500" y="1.500" width="97" height="97" fill="none" stroke="#0f0" /><path d="M50.500 1v98" stroke="#0f0" strokeWidth="3" /><path d="M1 50.500h98" stroke="#0f0" /><circle cx="50.500" cy="50.500" r="6.700" fill="none" stroke="#0f0" strokeWidth="1.500" /></svg>
              </Widget>
              <FreeText $x={249} $y={354} $w={300} $s={37.33} $lh={46} $wt={400} $ls={-0.15} $c="#f00" $align="center">(warning text)</FreeText>
              <FreeText $x={250} $y={406} $w={300} $s={26.67} $lh={33} $wt={400} $ls={0.22} $c="#ff0" $align="center">Rotation Locked</FreeText>
            </Artboard>
            <Pointer>
              <svg width="19" height="19" viewBox="0 0 19 19"><path d="M1 1h7L5.700 3.300l9 9L17 10v8h-7l2.300-2.300-9-9L1 9z" fill="#fff" stroke="#222" strokeWidth=".6" /></svg>
            </Pointer>
          </Grid>
          <CanvasTools>
            <Pill $w={70} $mr={4}>
              <Cell $w={24} $line><svg width="17" height="17" viewBox="0 0 17 17"><circle cx="8.500" cy="8.500" r="7" fill="#b8b8b8" stroke="#111" strokeWidth="1.400" /><path d="M2 5l3-3 3 1-1 3-2 1v2l-2-1zM5 9l3 1-1 4-2-1zM10 2l4 3 1 4-2 3-1-3-2-1-1-3 2-1z" fill="#111" /></svg></Cell>
              <Cell><span>&#8202;None</span><Caret $c="#111" $s={2} $m="2px 0 0" /></Cell>
            </Pill>
            <Pill $w={24} $mr={0}><Cell $on><svg width="17" height="17"><rect x="1" y="1" width="15" height="15" fill="none" stroke="#b3a88f" strokeWidth="1.500" strokeDasharray="2.500 1.500" /></svg></Cell></Pill>
            <Pill $w={24} $mr={3}><Cell $on><svg width="12" height="14" viewBox="0 0 12 14"><path d="M3 6V4q0-3 3-3t3 3v2" fill="none" stroke="#241700" strokeWidth="1.300" /><rect x="1" y="6" width="10" height="7.500" rx="1" fill="#241700" /></svg></Cell></Pill>
            <Pill $w={48} $mr={3}>
              <Cell $on $w={23}><svg width="16" height="14"><path d="M1 1h3v12H1zM6 2l6-1 2 2v3H6zM5 7.500h9V12H6z" fill="#3b3a38" /></svg></Cell>
              <Cell $c="#4a4a4a" $s={13}>R</Cell>
            </Pill>
            <Pill $w={49} $mr={1}>
              <Cell $on $w={24} $line><svg width="14" height="14"><path d="M1 0v14M5 0v14M9 0v14M13 0v14M0 1h14M0 5h14M0 9h14M0 13h14" stroke="#1a1000" strokeWidth="1.500" /></svg></Cell>
              <Cell><span>4</span><Caret $c="#111" $s={2} $m="2px 0 0" /></Cell>
            </Pill>
            <Pill $w={23} $mr={1}><Cell><svg width="17" height="17" viewBox="0 0 17 17"><path d="M8.500 3v11M3 8.500h11M7 4.500l1.500-1.700L10 4.500M7 12.500l1.500 1.700 1.500-1.700M4.500 7L2.800 8.500 4.500 10M12.500 7l1.700 1.500-1.700 1.500M4 1h9M4 16h9M1 4v9M16 4v9" fill="none" stroke="#444" strokeWidth="1.100" /></svg></Cell></Pill>
            <Pill $w={23} $mr={1} $bg="#696969" $h={22}><Cell><svg width="16" height="12"><path d="M.5 .5h15v11H.5z" fill="#808080" stroke="#333" /><path d="M1 11l4-6 3 3.500 2-2 5 4.500z" fill="#262626" /><circle cx="11.500" cy="3.500" r="1.200" fill="#333" /></svg></Cell></Pill>
            <Pill $w={24} $mr={0} $bg="#696969" $h={22}><Cell><svg width="17" height="13"><path d="M7 1v11H1z" fill="none" stroke="#333" /><path d="M9.500 0v12.500H16z" fill="#262626" /></svg></Cell></Pill>
            <DropPill $w={80} $h={21}>Screen Size<Caret $c="#111" /></DropPill>
            <DropPill $w={62} $h={21} $mr={3}>&#8202;Custom<Caret $c="#111" /></DropPill>
            <SizeField $lw={37} $fw={62} $bg="#cc2200"><span>Width</span><div>800<svg width="9" height="9"><path d="M4 0h4.500v4.500zM0 4v4.500h4.500z" fill="#111" /></svg></div></SizeField>
            <SizeField $lw={41} $fw={62} $bg="#68a800"><span>Height</span><div>600<svg width="9" height="9"><path d="M4 0h4.500v4.500zM0 4v4.500h4.500z" fill="#111" /></svg></div></SizeField>
          </CanvasTools>
          <CursorX />
          <CursorY />
          <Corner />
        </Viewport>

        <Dock $w={295}>
          <TabRow><Tabbed icon={<DetailsIcon />} label="Details" gap={5} /></TabRow>
          <DockBody />
        </Dock>
      </Main>

      <Bottom>
        <Dock $w={287}>
          <TabRow><Tabbed icon={<AnimIcon />} label="Animations" /></TabRow>
          <DockBody $pad="6px 6px 0">
            <Row $g={2}>
              <AddButton><svg width="10" height="10"><path d="M5 .5v9M.5 5h9" stroke="#f2f2f2" strokeWidth="2.500" /></svg>Animation</AddButton>
              <Search $w={192}>Search Animations<Mag /></Search>
            </Row>
            <AnimName>WarningTextFlash</AnimName>
          </DockBody>
        </Dock>
        <Dock $w={1626}>
          <TabRow>
            <Tabbed icon={<TimelineIcon />} label="Timeline" dim gap={5} />
            <Tabbed icon={<CompilerIcon />} label="Compiler Results" gap={7} />
          </TabRow>
          <DockBody $pad="6px 6px 0">
            <LogBox>
              {LOG.map(([link, msg]) => (
                <LogRow key={link}><b /><Mag c="#a8a8a8" s={14} w={1.8} /><DottedLink $lh={13}>{link}</DottedLink><LogMessage>{": " + msg}</LogMessage></LogRow>
              ))}
            </LogBox>
            <Clear>Clear</Clear>
          </DockBody>
        </Dock>
      </Bottom>

      <Taskbar>
        <Slot $w={48}><svg width="17" height="17" viewBox="0 0 17 17"><path d="M0 2.300L7.500 1.200V8H0zM8.300 1.100L17 0v8H8.300zM0 9h7.500v6.800L0 14.700zM8.300 9H17v8l-8.700-1.100z" fill="#fff" /></svg></Slot>
        <TaskSearch>
          <svg width="17" height="17" viewBox="0 0 17 17"><circle cx="10.500" cy="6" r="5.300" fill="none" stroke="#222" strokeWidth="1.200" /><path d="M6.800 9.800L.8 16" stroke="#222" strokeWidth="1.300" /></svg>
          <span>在这里输入你要搜索的内容</span>
          <Palace />
        </TaskSearch>
        <Slot $w={48}><svg width="17" height="17"><circle cx="8.500" cy="8.500" r="6.800" fill="none" stroke="#f4f4f4" strokeWidth="2.200" /></svg></Slot>
        <Slot $w={48}><svg width="18" height="16" viewBox="0 0 18 16"><path d="M1.500 0v2.500h9V0M1.500 16v-2.500h9V16M1.500 5h9v6h-9zM15 0v16" fill="none" stroke="#eee" strokeWidth="1.200" /><path d="M13.500 4.500h3v3h-3z" fill="#eee" /></svg></Slot>
        <Slot $w={52}><svg width="24" height="24" viewBox="0 0 24 24"><path d="M7 6V2.500Q7 1 8.500 1h7Q17 1 17 2.500V6" fill="none" stroke="#2aa8e8" strokeWidth="1.800" /><path d="M1 5h22v15q0 3-3 3H4q-3 0-3-3z" fill="#f1f1f1" /><path d="M7.500 9.500h4v4h-4z" fill="#f05022" /><path d="M12.500 9.500h4v4h-4z" fill="#7fba00" /><path d="M7.500 14.500h4v4h-4z" fill="#00a4ef" /><path d="M12.500 14.500h4v4h-4z" fill="#ffb900" /></svg></Slot>
        <TaskItem $w={123} $ml={2} $pl={8} $g={10} $ls={0.2}><svg width="15" height="22" viewBox="0 0 15 22"><path d="M0 1l3-1h9l2 2v16H3v3l-3-2z" fill="#f8d775" /><path d="M0 1l4 2v18l-4-2z" fill="#fbe6a2" /></svg>Desktop</TaskItem>
        <Slot $w={52}><svg width="19" height="22" viewBox="0 0 19 22"><path d="M12 0l6 2v18l-6 2z" fill="#e8541c" /><path d="M12 0L1 4v13l4-2V6.500l7-2zM1 17l11 5v-4z" fill="#c4231c" /></svg></Slot>
        <Slot $w={46}><svg width="24" height="23" viewBox="0 0 24 23"><path d="M0 8l12-8 12 8v14H0z" fill="#0f62ac" /><path d="M2 7.500h20V15H2z" fill="#fff" /><path d="M0 8l12 8 12-8v15H0z" fill="#2fb2f2" /><path d="M0 23l12-9 12 9z" fill="#1b93de" /></svg></Slot>
        <Slot $w={47}><svg width="18" height="24" viewBox="0 0 18 24"><path d="M0 0h18v24H0z" fill="#6c7a86" /><path d="M2 2h14v4H2z" fill="#3fd0f6" /><path d="M2 8.500h3.500v3.500H2zM7 8.500h3.500v3.500H7zM12 8.500h4v3.500h-4zM2 13.500h3.500V17H2zM7 13.500h3.500V17H7zM2 18.500h3.500V22H2zM7 18.500h3.500V22H7z" fill="#dde4ea" /><path d="M12 13.500h4V22h-4z" fill="#1766a8" /></svg></Slot>
        <Slot $w={46}><svg width="25" height="25" viewBox="0 0 25 25"><defs><linearGradient id="ed" x1="0" y1="0" x2="1" y2=".3"><stop offset="0" stopColor="#27a6e4" /><stop offset="1" stopColor="#5fdc6c" /></linearGradient></defs><circle cx="12.500" cy="12.500" r="12" fill="#1273cc" /><path d="M.8 10C2 4 7 .5 12.500 .5c7 0 12 4.500 12 9.800 0 4-3 6-6.500 6-3 0-4-1-3.500-2 1.500-2 .5-5.500-3.500-5.800C6 8 2 11 .8 15z" fill="url(#ed)" /><path d="M10 10c-3 3-2 8 2 10 4 2 8 1 11-1-3 5-9 7-14 4.500C4 20.500 5 12 10 10z" fill="#0c4f9c" /><path d="M12.500 10.500c2.500 1 2 3 1.500 4.500 1 2 5 2.500 10 1-2 4-7 4.500-10 2.500-3-2.500-3-6-1.500-8z" fill="#1c1c1c" /></svg></Slot>
        <Slot $w={46}>
          <svg width="23" height="23" viewBox="0 0 24 24">
            <circle cx="12" cy="12" r="11.500" fill="#f7c51c" />
            <path d="M12 12L2 6.300A11.500 11.500 0 0 0 11 23.500l5.500-9.500z" fill="#2aa24c" />
            <path d="M12 6.500h10.100A11.500 11.500 0 0 0 2 6.300L7.200 14.700 12 12z" fill="#e3392e" />
            <circle cx="12" cy="12" r="5.500" fill="#fff" /><circle cx="12" cy="12" r="4.300" fill="#3f7fee" />
          </svg>
        </Slot>
        <Slot $w={46}><svg width="24" height="24" viewBox="0 0 24 24"><defs><linearGradient id="ff" x1="1" y1="0" x2=".2" y2="1"><stop offset="0" stopColor="#ffe226" /><stop offset=".5" stopColor="#ff8a1c" /><stop offset="1" stopColor="#f0306c" /></linearGradient></defs><path d="M14 0c1 3 5 4 7 8 4 8-1 16-9 16S-1 17 1.500 9L3 5l1.500 2L6 3.500 8 7c3-.5 4-3 6-7z" fill="url(#ff)" /><circle cx="12" cy="13" r="5" fill="#8546dc" /><path d="M6 10c3-2 6 0 7 1-2 0-3 1-3 3-3 0-4-2-4-4z" fill="#ffb02c" /></svg></Slot>
        <TaskItem $w={122} $ml={5} $pl={8} $g={7}><svg width="18" height="13"><rect x="1.700" y="1.700" width="14.600" height="9.600" rx="4.800" fill="none" stroke="#fff" strokeWidth="3.200" /></svg>Oculus</TaskItem>
        <TaskItem $w={122} $ml={9} $pl={5} $g={4}><svg width="24" height="22" viewBox="0 0 24 22"><path d="M6 0h18v6H6z" fill="#41a5ee" /><path d="M6 5.500h18V11H6z" fill="#2b7cd3" /><path d="M6 11h18v5.500H6z" fill="#185abd" /><path d="M6 16.500h18V22H6z" fill="#103f91" /><path d="M0 5h12v12H0z" fill="#185abd" /><path d="M2.500 8l1.500 6 2-5.500L8 14l1.500-6" fill="none" stroke="#fff" strokeWidth="1.300" /></svg>Final Report....</TaskItem>
        <TaskItem $w={123} $ml={9} $pl={5} $g={4} $ls={0.3}><RoundU />VR - Unreal ...</TaskItem>
        <TaskItem $w={130} $ml={4} $pl={9} $g={5} $active><RoundU />_w_FollowUp...</TaskItem>
        <Tray>
          <Lang>EN</Lang>
          <TrayCell $w={32}><svg width="25" height="28" viewBox="0 0 25 28"><path d="M1 14Q3 6 10 6t9 8z" fill="#5fb0ea" /><path d="M10 13v10q0 3-3 3" fill="none" stroke="#9aa4ad" strokeWidth="1.500" /><path d="M12 4l2-3M16 4l2-3M20 4l2-3M18 8l2-3M22 9l2-3M21 13l2-3" stroke="#3f92dc" strokeWidth="1.300" /><circle cx="19.500" cy="23.500" r="3.500" fill="#e0142c" /></svg></TrayCell>
          <TrayCell $w={57} $s={14}>正在...</TrayCell>
          <TrayCell $w={25}><svg width="13" height="9"><path d="M1 8l5.500-6L12 8" fill="none" stroke="#eee" strokeWidth="1.300" /></svg></TrayCell>
          <TrayCell $w={22}><svg width="13" height="19" viewBox="0 0 13 19"><rect x="1" y="5" width="8" height="9" rx="1.500" fill="none" stroke="#e4e4e4" strokeWidth="1.400" /><path d="M9 8.500l3-2v6.500L9 11M1.500 2.500Q5 -.3 8.500 2.500M1.500 16.500Q5 19.300 8.500 16.500" fill="none" stroke="#e4e4e4" strokeWidth="1.200" /></svg></TrayCell>
          <TrayCell $w={23}><svg width="15" height="17" viewBox="0 0 15 17"><path d="M2 1h11q1.500 0 1.500 1.500v9q0 1.500-1.500 1.500h-2l-2 3-2-3H2Q.5 13 .5 11.500v-9Q.5 1 2 1z" fill="#1aa3f2" /><path d="M7.500 2.500v9M3.500 4.500l8 5M11.500 4.500l-8 5" stroke="#fff" strokeWidth="1.700" /></svg></TrayCell>
          <TrayCell $w={27}><svg width="16" height="16" viewBox="0 0 16 16"><circle cx="8" cy="8" r="8" fill="#1a5d96" /><circle cx="10.500" cy="5.800" r="2.600" fill="none" stroke="#fff" strokeWidth="1.500" /><path d="M0 8.500l5.500 2.500 3.500-3M5 11.500l2 1.500" stroke="#fff" strokeWidth="2.300" /></svg></TrayCell>
          <TrayCell $w={21}><svg width="14" height="14" viewBox="0 0 14 14"><path d="M1 13Q1.500 3 13.500 1M4 13Q4.500 6 13.500 4.500M7 13q.5-4 6.500-5M10 13q.5-1.500 3.500-2" fill="none" stroke="#d8d8d8" strokeWidth="1.100" /></svg></TrayCell>
          <TrayCell $w={28}><svg width="17" height="15" viewBox="0 0 17 15"><path d="M1 5h3l4-4v13l-4-4H1z" fill="none" stroke="#eee" strokeWidth="1.200" /><path d="M10 5q1.500 2.500 0 5M12.500 3q3 4.500 0 9" fill="none" stroke="#ddd" strokeWidth="1.100" /><path d="M15 1.500q3 6 0 12" fill="none" stroke="#777" /></svg></TrayCell>
          <TrayCell $w={23}><svg width="18" height="18" viewBox="0 0 18 18"><path d="M6 11L14 1.500l2.500 2L8 13l-3 1zM6 9q-5-1-4.500 4t5 3.500 4-4 3-5.500 3 1" fill="none" stroke="#e2e2e2" strokeWidth="1.200" /></svg></TrayCell>
          <Clock>15:30<br />2022/8/15</Clock>
          <TrayCell $w={40}><svg width="40" height="18" viewBox="0 0 40 18"><path d="M10 1h15v12.500h-5l-2.500 3-2.500-3h-5z" fill="none" stroke="#eee" strokeWidth="1.300" /></svg></TrayCell>
          <ShowDesktop />
        </Tray>
      </Taskbar>
    </Screen>
  );
}
